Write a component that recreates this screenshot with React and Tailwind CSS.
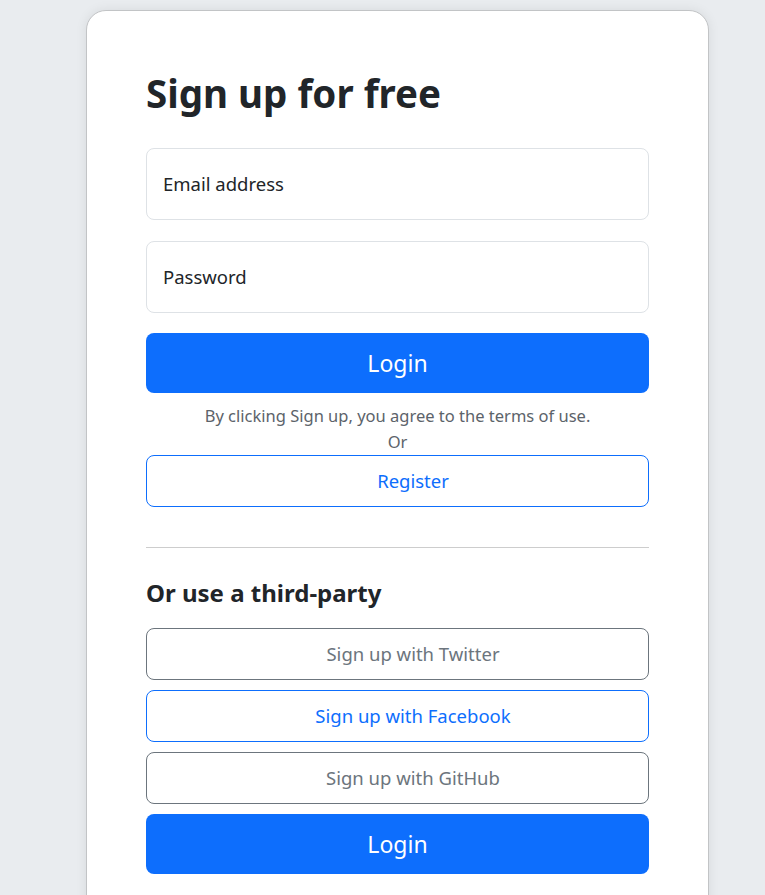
export default function App() {
  const outline =
    "flex h-[52px] w-full items-center justify-center rounded-[8px] border bg-white pl-[31px] text-[18.5px]";
  return (
    <div
      className="min-h-screen bg-[#e9ecef] pt-[10px] pl-[86px]"
      style={{ fontFamily: '"Noto Sans", "Open Sans", sans-serif' }}
    >
      <div className="w-[623px] rounded-[20px] border border-[#c2c4c6] bg-white px-[59px] pt-[58px] pb-[60px] shadow-[0_0_12px_rgba(0,0,0,0.08)]">
        <h1 className="pt-[1px] text-[38.5px] font-bold leading-[47px] text-[#212529]">Sign up for free</h1>
        <div className="mt-[31px] flex flex-col gap-[21px]">
          <div className="flex h-[72px] items-center rounded-[8px] border border-[#dee2e6] px-4 text-[18.5px] text-[#212529]">
            Email address
          </div>
          <div className="flex h-[72px] items-center rounded-[8px] border border-[#dee2e6] px-4 text-[18.5px] text-[#212529]">
            Password
          </div>
        </div>
        <button className="mt-[20px] flex h-[60px] w-full items-center justify-center rounded-[8px] bg-[#0d6efd] text-[23px] text-white">
          Login
        </button>
        <div className="mt-[10px] text-center text-[16.5px] leading-[26px] text-[#5c636a]">
          <div>By clicking Sign up, you agree to the terms of use.</div>
          <div>Or</div>
        </div>
        <button className={outline + " border-[#0d6efd] text-[#0d6efd]"}>Register</button>
        <hr className="mt-[40px] border-t border-[#cdcdcd]" />
        <h2 className="mt-[30px] text-[24px] font-bold leading-[29px] text-[#212529]">Or use a third-party</h2>
        <div className="mt-[21px] flex flex-col gap-[10px]">
          <button className={outline + " border-[#6c757d] text-[#6c757d]"}>Sign up with Twitter</button>
          <button className={outline + " border-[#0d6efd] text-[#0d6efd]"}>Sign up with Facebook</button>
          <button className={outline + " border-[#6c757d] text-[#6c757d]"}>Sign up with GitHub</button>
          <button className="flex h-[60px] w-full items-center justify-center rounded-[8px] bg-[#0d6efd] text-[23px] text-white">
            Login
          </button>
        </div>
      </div>
    </div>
  );
}
